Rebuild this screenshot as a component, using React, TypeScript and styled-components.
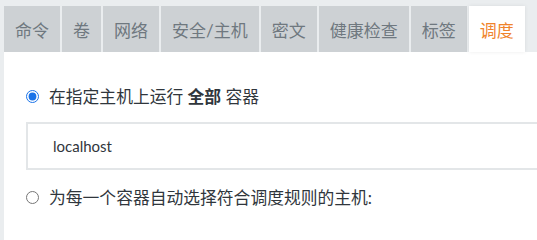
import React, { useState } from "react";
import styled, { createGlobalStyle } from "styled-components";

const GlobalStyle = createGlobalStyle`
  html, body {
    margin: 0;
    padding: 0;
    background: #eaedef;
    font-family: Lato, "Noto Sans CJK SC", sans-serif;
  }
  #root {
    overflow: hidden;
  }
`;

const Page = styled.div`
  display: flex;
  flex-direction: column;
  height: 100vh;
  padding: 6px 0 0 4px;
  box-sizing: border-box;
`;

const TabBar = styled.div`
  display: flex;
  gap: 2px;
  height: 46px;
  flex-shrink: 0;
`;

const Tab = styled.div<{ $active?: boolean }>`
  display: flex;
  align-items: center;
  justify-content: center;
  padding: 0 11px;
  font-size: 17px;
  white-space: nowrap;
  color: ${(p) => (p.$active ? "#f0842c" : "#6f787f")};
  background: ${(p) => (p.$active ? "#ffffff" : "#cdd1d4")};
  box-shadow: ${(p) => (p.$active ? "0 0 4px rgba(0, 0, 0, 0.08)" : "none")};
  position: relative;
  z-index: ${(p) => (p.$active ? 1 : 0)};
  cursor: pointer;
`;

const Panel = styled.div`
  flex: 1;
  background: #ffffff;
  padding: 32px 0 0 22px;
  color: #30363c;
`;

const RadioRow = styled.label<{ $top?: number }>`
  display: flex;
  align-items: center;
  gap: 10px;
  height: 24px;
  margin-top: ${(p) => p.$top ?? 0}px;
  font-size: 16.8px;
  cursor: pointer;

  input {
    margin: 0;
    width: 13px;
    height: 13px;
    accent-color: #1a73e8;
  }

  b {
    font-weight: 700;
  }
`;

const HostInput = styled.input`
  display: block;
  box-sizing: border-box;
  width: 560px;
  height: 48px;
  margin-top: 14px;
  padding: 0 0 0 25px;
  border: 2px solid #e3e6e8;
  border-right: none;
  font-family: Lato, "Noto Sans CJK SC", sans-serif;
  font-size: 15px;
  color: #30363c;
  outline: none;
`;

const tabs = ["命令", "卷", "网络", "安全/主机", "密文", "健康检查", "标签", "调度"];

export default function App() {
  const [active, setActive] = useState("调度");
  const [mode, setMode] = useState("all");
  const [host, setHost] = useState("localhost");

  return (
    <>
      <GlobalStyle />
      <Page>
        <TabBar>
          {tabs.map((t) => (
            <Tab key={t} $active={t === active} onClick={() => setActive(t)}>
              {t}
            </Tab>
          ))}
        </TabBar>
        <Panel>
          <RadioRow>
            <input
              type="radio"
              name="schedule"
              checked={mode === "all"}
              onChange={() => setMode("all")}
            />
            <span>
              在指定主机上运行 <b>全部</b> 容器
            </span>
          </RadioRow>
          <HostInput value={host} onChange={(e) => setHost(e.target.value)} />
          <RadioRow $top={15}>
            <input
              type="radio"
              name="schedule"
              checked={mode === "rules"}
              onChange={() => setMode("rules")}
            />
            <span>为每一个容器自动选择符合调度规则的主机:</span>
          </RadioRow>
        </Panel>
      </Page>
    </>
  );
}
